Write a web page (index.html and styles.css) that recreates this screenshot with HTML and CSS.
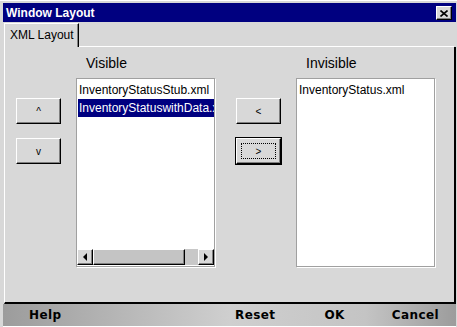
FILE: index.html
```html
<!DOCTYPE html>
<html lang="en">
<head>
    <meta charset="UTF-8">
    <title>Window Layout</title>
    <link rel="stylesheet" href="styles.css">
</head>
<body>
    <div class="window">
        <div class="titlebar">
            <span>Window Layout</span>
            <button class="close">
                <svg width="8" height="7" viewBox="0 0 8 7">
                    <path d="M0.5 0.5 L7.5 6.5 M7.5 0.5 L0.5 6.5" stroke="#000" stroke-width="1.6" fill="none"/>
                </svg>
            </button>
        </div>

        <div class="tabstrip">
            <div class="tab">XML Layout</div>
            <div class="tab-fill"></div>
        </div>

        <div class="panel">
            <div class="movers">
                <button class="btn">^</button>
                <button class="btn">v</button>
            </div>

            <div class="listcol">
                <div class="caption">Visible</div>
                <div class="list">
                    <div class="item">InventoryStatusStub.xml</div>
                    <div class="item selected">InventoryStatuswithData.xml</div>
                    <div class="hscroll">
                        <span class="arrow left"></span>
                        <span class="thumb"></span>
                        <span class="track"></span>
                        <span class="arrow right"></span>
                    </div>
                </div>
            </div>

            <div class="movers transfer">
                <button class="btn">&lt;</button>
                <button class="btn focused"><span class="focus">&gt;</span></button>
            </div>

            <div class="listcol">
                <div class="caption">Invisible</div>
                <div class="list">
                    <div class="item">InventoryStatus.xml</div>
                </div>
            </div>
        </div>

        <div class="footer">
            <span class="help">Help</span>
            <span class="reset">Reset</span>
            <span class="ok">OK</span>
            <span class="cancel">Cancel</span>
        </div>
    </div>
</body>
</html>
```

FILE: styles.css
```css
body {
    margin: 0;
    background: #d8d8d8;
    font-family: "Liberation Sans", Arial, sans-serif;
    font-size: 12px;
}
.window {
    width: 457px;
    height: 327px;
    box-sizing: border-box;
    padding: 2px 1px 0 3px;
    border-top: 1px solid #fff;
    background: #d8d8d8;
    display: flex;
    flex-direction: column;
}
.titlebar {
    height: 19px;
    background: #000080;
    color: #fff;
    font-weight: bold;
    font-size: 12px;
    display: flex;
    align-items: center;
    justify-content: space-between;
    padding-left: 3px;
}
.close {
    width: 16px;
    height: 14px;
    margin: 1px 4px 0 0;
    padding: 0;
    background: #d8d8d8;
    border: 1px solid;
    border-color: #fff #000 #000 #fff;
    box-shadow: inset -1px -1px #808080;
    display: flex;
    align-items: center;
    justify-content: center;
}
.tabstrip {
    display: flex;
    height: 24px;
    padding: 1px 0 0 1px;
    margin-right: 2px;
}
.tab {
    width: 68px;
    border-top: 1px solid #fff;
    border-left: 1px solid #fff;
    border-right: 1px solid #000;
    box-shadow: inset -1px 0 #808080;
    padding-left: 5px;
    line-height: 22px;
    font-size: 12px;
    white-space: nowrap;
    color: #000;
}
.tab-fill {
    flex: 1;
    border-bottom: 1px solid #fff;
}
.panel {
    flex: 1;
    margin: 0 0 0 1px;
    border-left: 1px solid #fff;
    border-right: 2px solid #000;
    border-bottom: 2px solid #000;
    margin-right: 0;
    display: flex;
    padding-left: 11px;
    gap: 15px;
}
.movers {
    display: flex;
    flex-direction: column;
    gap: 14px;
    padding-top: 51px;
}
.transfer {
    margin-left: 6px;
}
.btn {
    width: 45px;
    height: 26px;
    padding: 0;
    background: #d8d8d8;
    border: 1px solid;
    border-color: #fff #000 #000 #fff;
    box-shadow: inset -1px -1px #808080;
    font-family: "Liberation Sans", Arial, sans-serif;
    font-size: 10px;
    color: #000;
}
.btn.focused {
    outline: 1px solid #000;
    outline-offset: 0;
    display: flex;
    align-items: center;
    justify-content: center;
}
.focus {
    width: 35px;
    height: 16px;
    border: 1px dotted #000;
    display: flex;
    align-items: center;
    justify-content: center;
    box-sizing: border-box;
}
.listcol {
    display: flex;
    flex-direction: column;
}
.caption {
    height: 31px;
    box-sizing: border-box;
    padding: 8px 0 0 10px;
    line-height: 16px;
    font-size: 14px;
}
.list {
    width: 139px;
    height: 189px;
    box-sizing: border-box;
    background: #fff;
    border: 1px solid #a0a0a0;
    box-shadow: 1px 1px 0 #fff;
    padding-top: 2px;
    display: flex;
    flex-direction: column;
    overflow: hidden;
}
.item {
    height: 18px;
    line-height: 18px;
    padding-left: 2px;
    white-space: nowrap;
    overflow: hidden;
    color: #000;
}
.item.selected {
    background: #000080;
    color: #fff;
    margin-left: 1px;
    padding-left: 1px;
}
.hscroll {
    margin-top: auto;
    margin-bottom: 1px;
    height: 16px;
    display: flex;
    background: #c8c8c8;
}
.arrow {
    width: 16px;
    height: 16px;
    box-sizing: border-box;
    background: #d8d8d8;
    border: 1px solid;
    border-color: #fff #000 #000 #fff;
    box-shadow: inset -1px -1px #808080;
    display: flex;
    align-items: center;
    justify-content: center;
}
.arrow::before {
    content: "";
    border-top: 4px solid transparent;
    border-bottom: 4px solid transparent;
}
.arrow.left::before {
    border-right: 4px solid #000;
}
.arrow.right::before {
    border-left: 4px solid #000;
}
.thumb {
    width: 92px;
    box-sizing: border-box;
    background: #c4c4c4;
    border: 1px solid;
    border-color: #fff #000 #000 #fff;
    box-shadow: inset -1px -1px #808080;
}
.track {
    flex: 1;
}
.footer {
    height: 22px;
    margin-left: 0;
    border-bottom: 1px solid #fff;
    background: linear-gradient(to right, #9c9c9c, #cfcfcf 50%, #c4c4c4 80%, #9c9c9c);
    display: flex;
    align-items: center;
    font-family: "DejaVu Sans", Verdana, sans-serif;
    font-weight: bold;
    font-size: 12px;
    letter-spacing: 0.4px;
    color: #000;
    padding-left: 26px;
}
.reset {
    margin-left: auto;
}
.ok {
    margin-left: 49px;
}
.cancel {
    margin-left: 47px;
    margin-right: 17px;
}
```
